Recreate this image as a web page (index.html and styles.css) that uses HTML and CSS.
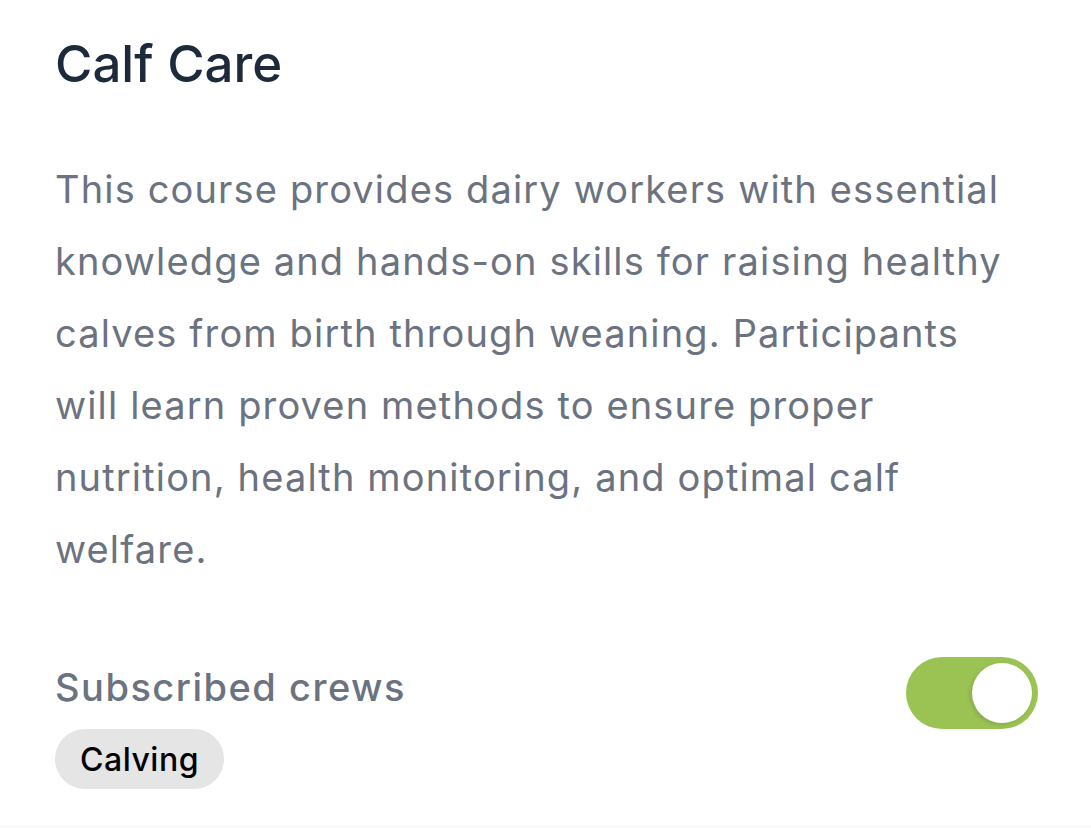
FILE: index.html
```html
<!DOCTYPE html>
<html>
<head>
<meta charset="utf-8">
<link rel="stylesheet" href="styles.css">
</head>
<body>
<div class="card">
  <h1 class="title">Calf Care</h1>
  <p class="desc">This course provides dairy workers with essential knowledge and hands-on skills for raising healthy calves from birth through weaning. Participants will learn proven methods to ensure proper nutrition, health monitoring, and optimal calf welfare.</p>
  <div class="crews">
    <div class="crews-info">
      <div class="crews-label">Subscribed crews</div>
      <div class="tags"><span class="tag">Calving</span></div>
    </div>
    <div class="toggle"><span class="knob"></span></div>
  </div>
</div>
</body>
</html>
```
FILE: styles.css
```css
html, body {
  margin: 0;
  padding: 0;
  background: #fafafa;
}
body {
  font-family: Inter, "Noto Sans", sans-serif;
}
.card {
  background: #ffffff;
  height: 825px;
  box-sizing: border-box;
  padding: 34px 53px 0 55px;
}
.title {
  margin: 0;
  font-size: 51px;
  font-weight: 500;
  line-height: 60px;
  color: #1e293b;
  letter-spacing: 0;
}
.desc {
  margin: 59px 0 0 0;
  max-width: 968px;
  font-size: 38px;
  line-height: 72px;
  letter-spacing: 1.15px;
  color: #6b7280;
}
.crews {
  margin-top: 80px;
  display: flex;
  justify-content: space-between;
  align-items: flex-start;
}
.crews-label {
  font-size: 38px;
  font-weight: 500;
  line-height: 44px;
  letter-spacing: 1.5px;
  color: #6b7280;
}
.tags {
  margin-top: 20px;
  display: flex;
}
.tag {
  background: #e5e5e5;
  border-radius: 30px;
  height: 60px;
  padding: 0 25px;
  display: flex;
  align-items: center;
  font-size: 32px;
  font-weight: 500;
  letter-spacing: 0.5px;
  color: #000;
}
.toggle {
  width: 132px;
  height: 72px;
  border-radius: 36px;
  background: #9bc353;
  position: relative;
  margin-top: -8px;
}
.knob {
  position: absolute;
  top: 6px;
  right: 6px;
  width: 60px;
  height: 60px;
  border-radius: 50%;
  background: #fff;
  box-shadow: -2px 2px 4px rgba(0,0,0,0.12);
}
```
